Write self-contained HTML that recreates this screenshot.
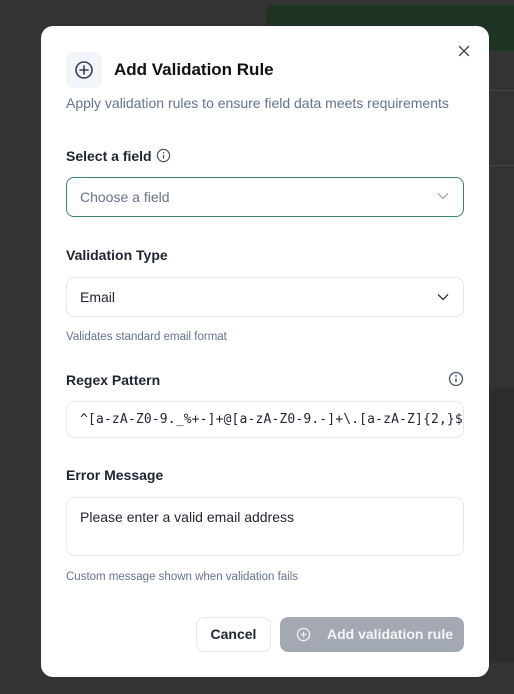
<!DOCTYPE html><html><head><style>
*{box-sizing:border-box;margin:0;padding:0}
body{width:514px;height:694px;background:#333;font-family:"Liberation Sans",sans-serif;position:relative;overflow:hidden}
.bgcard{position:absolute;left:266px;top:5px;width:260px;height:46px;background:#1f3324;border-radius:8px}
.modal{position:absolute;left:41px;top:26px;width:448px;height:651px;background:#fff;border-radius:12px}
.a{position:absolute}
.lbl{font-size:14px;font-weight:bold;color:#1e2430;left:25px}
.box{left:25px;width:398px;border:1px solid #e2e8f0;border-radius:8px;font-size:14px;color:#1e2430;padding-left:13px}
.help{left:25px;font-size:11.5px;color:#64748b}
</style></head><body>
<div class="bgcard"></div>
<div class="a" style="left:490px;top:90px;width:30px;height:1px;background:#444"></div>
<div class="a" style="left:490px;top:165px;width:30px;height:1px;background:#444"></div>
<div class="a" style="left:489px;top:388px;width:30px;height:275px;background:#2c2c2c"></div>
<div class="modal">
<svg class="a" style="left:417px;top:19px" width="12" height="12" viewBox="0 0 12 12"><path d="M1.5 1.5L10.5 10.5M10.5 1.5L1.5 10.5" stroke="#444" stroke-width="1.3" stroke-linecap="round"/></svg>
<div class="a" style="left:25px;top:26px;width:36px;height:36px;background:#f1f4f8;border-radius:8px"></div>
<svg class="a" style="left:33px;top:34px" width="20" height="20" viewBox="0 0 20 20"><circle cx="10" cy="10" r="8" fill="none" stroke="#334155" stroke-width="1.6"/><path d="M10 6v8M6 10h8" stroke="#334155" stroke-width="1.6" stroke-linecap="round"/></svg>
<div class="a" style="left:73px;top:34px;font-size:17px;font-weight:bold;color:#111">Add Validation Rule</div>
<div class="a" style="left:25px;top:69px;font-size:14px;color:#64748b">Apply validation rules to ensure field data meets requirements</div>
<div class="a lbl" style="top:122px">Select a field</div>
<svg class="a" style="left:115px;top:122px" width="15" height="15" viewBox="0 0 16 16"><circle cx="8" cy="8" r="6.5" fill="none" stroke="#475569" stroke-width="1.3"/><path d="M8 7.3v4" stroke="#475569" stroke-width="1.4"/><circle cx="8" cy="5" r=".9" fill="#475569"/></svg>
<div class="a box" style="top:151px;height:40px;border-color:#3a7f78;line-height:38px;color:#64748b">Choose a field</div>
<svg class="a" style="left:396px;top:166px" width="12" height="8" viewBox="0 0 12 8"><path d="M1 1.5l5 5 5-5" fill="none" stroke="#a0a8b4" stroke-width="1.3"/></svg>
<div class="a lbl" style="top:221px">Validation Type</div>
<div class="a box" style="top:251px;height:40px;line-height:38px">Email</div>
<svg class="a" style="left:396px;top:267px" width="12" height="8" viewBox="0 0 12 8"><path d="M1 1.5l5 5 5-5" fill="none" stroke="#333" stroke-width="1.3"/></svg>
<div class="a help" style="top:305px">Validates standard email format</div>
<div class="a lbl" style="top:346px">Regex Pattern</div>
<svg class="a" style="left:407px;top:345px" width="16" height="16" viewBox="0 0 16 16"><circle cx="8" cy="8" r="6.5" fill="none" stroke="#475569" stroke-width="1.3"/><path d="M8 7.3v4" stroke="#475569" stroke-width="1.4"/><circle cx="8" cy="5" r=".9" fill="#475569"/></svg>
<div class="a box" style="top:375px;height:37px;line-height:35px;font-family:'DejaVu Sans Mono',monospace;font-size:13px;letter-spacing:0.15px;white-space:nowrap;overflow:hidden">^[a-zA-Z0-9._%+-]+@[a-zA-Z0-9.-]+\.[a-zA-Z]{2,}$</div>
<div class="a lbl" style="top:441px">Error Message</div>
<div class="a box" style="top:471px;height:59px;padding-top:11px">Please enter a valid email address</div>
<div class="a help" style="top:545px">Custom message shown when validation fails</div>
<div class="a" style="left:155px;top:591px;width:75px;height:35px;border:1px solid #e2e8f0;border-radius:8px;font-size:14px;font-weight:bold;color:#1e2430;text-align:center;line-height:33px">Cancel</div>
<div class="a" style="left:239px;top:591px;width:184px;height:35px;background:#a3a9b2;border-radius:8px;font-size:14px;font-weight:bold;color:#f4f5f7;line-height:35px;padding-left:47px">Add validation rule</div>
<svg class="a" style="left:255px;top:601px" width="15" height="15" viewBox="0 0 16 16"><circle cx="8" cy="8" r="6.5" fill="none" stroke="#eef0f3" stroke-width="1.4"/><path d="M8 5v6M5 8h6" stroke="#eef0f3" stroke-width="1.4"/></svg>
</div>
</body></html>
